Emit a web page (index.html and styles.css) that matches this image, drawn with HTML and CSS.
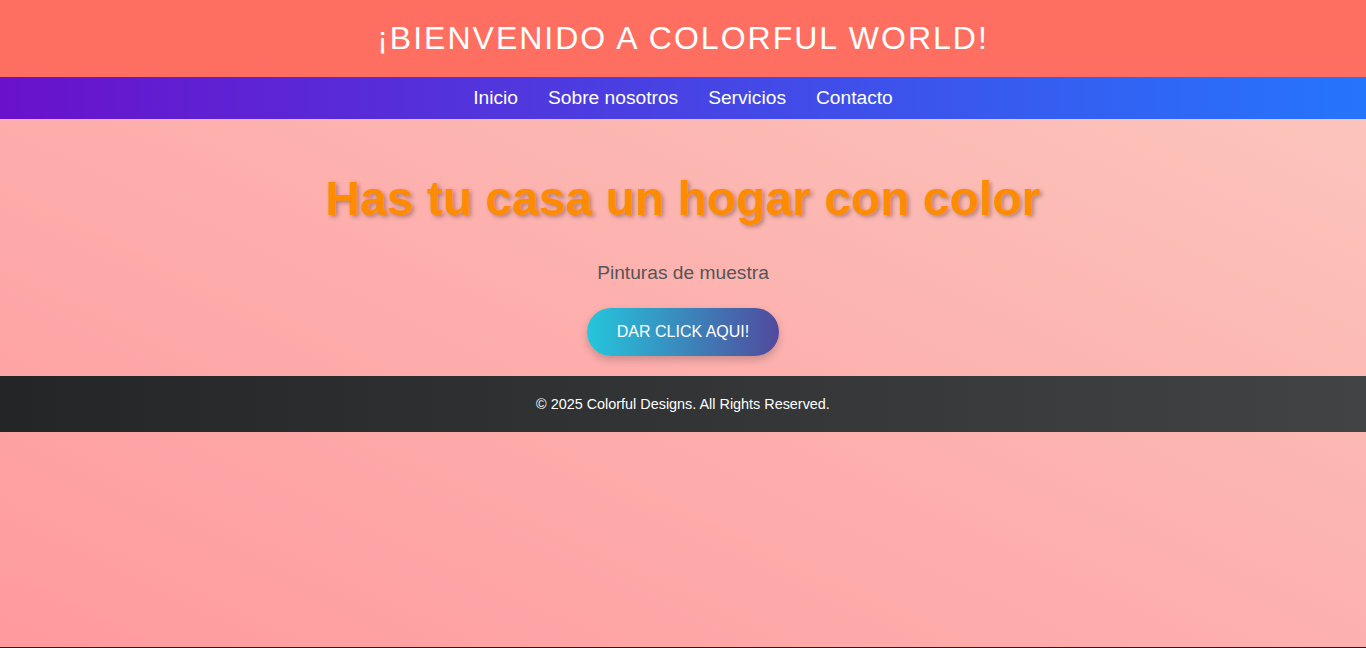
FILE: index.html
```html
<!DOCTYPE html>
<html lang="es">
<head>
<meta charset="utf-8">
<title>Colorful World</title>
<link rel="stylesheet" href="styles.css">
</head>
<body>
<div class="page">
  <header class="site-header">
    <h1 class="site-title">¡Bienvenido a Colorful World!</h1>
  </header>
  <nav class="site-nav">
    <a href="#" class="nav-link">Inicio</a>
    <a href="#" class="nav-link">Sobre nosotros</a>
    <a href="#" class="nav-link">Servicios</a>
    <a href="#" class="nav-link">Contacto</a>
  </nav>
  <section class="hero">
    <h2 class="hero-title">Has tu casa un hogar con color</h2>
    <p class="hero-text">Pinturas de muestra</p>
    <a href="#" class="hero-btn">DAR CLICK AQUI!</a>
  </section>
  <footer class="site-footer">
    <p class="footer-text">© 2025 Colorful Designs. All Rights Reserved.</p>
  </footer>
</div>
</body>
</html>
```
FILE: styles.css
```css
html {
  background: #1f1f25;
  height: 100%;
}
body {
  margin: 0;
  font-family: "Liberation Sans", Arial, sans-serif;
}
.page {
  height: calc(100vh - 1px);
  background: linear-gradient(to top right, #ff9a9e, #fbc8bf);
}
.site-header {
  background: #ff6f61;
  padding: 20px;
  text-align: center;
}
.site-title {
  margin: 0;
  color: #fff;
  font-size: 32px;
  font-weight: normal;
  text-transform: uppercase;
  letter-spacing: 2px;
  line-height: 37px;
}
.site-nav {
  display: flex;
  justify-content: center;
  padding: 10px;
  background: linear-gradient(to right, #6a11cb, #2575fc);
}
.nav-link {
  color: #fff;
  text-decoration: none;
  font-size: 19.2px;
  line-height: 22px;
  margin: 0 15px;
}
.hero {
  display: flex;
  flex-direction: column;
  align-items: center;
  padding: 20px;
  text-align: center;
}
.hero-title {
  margin: 32px 0 0;
  font-size: 48px;
  line-height: 55px;
  font-weight: bold;
  color: #ff8c00;
  text-shadow: 2px 2px 4px rgba(0, 0, 0, 0.3);
}
.hero-text {
  margin: 36px 0 0;
  font-size: 19.2px;
  line-height: 22px;
  color: #555;
}
.hero-btn {
  margin-top: 24px;
  padding: 15px 30px;
  font-size: 16px;
  line-height: 18px;
  color: #fff;
  text-decoration: none;
  border-radius: 25px;
  background: linear-gradient(to right, #24c6dc, #514a9d);
  box-shadow: 0 4px 8px rgba(0, 0, 0, 0.2);
}
.site-footer {
  padding: 20px;
  text-align: center;
  background: linear-gradient(to right, #232526, #414345);
}
.footer-text {
  margin: 0;
  color: #fff;
  font-size: 14.4px;
  line-height: 16px;
}
```
